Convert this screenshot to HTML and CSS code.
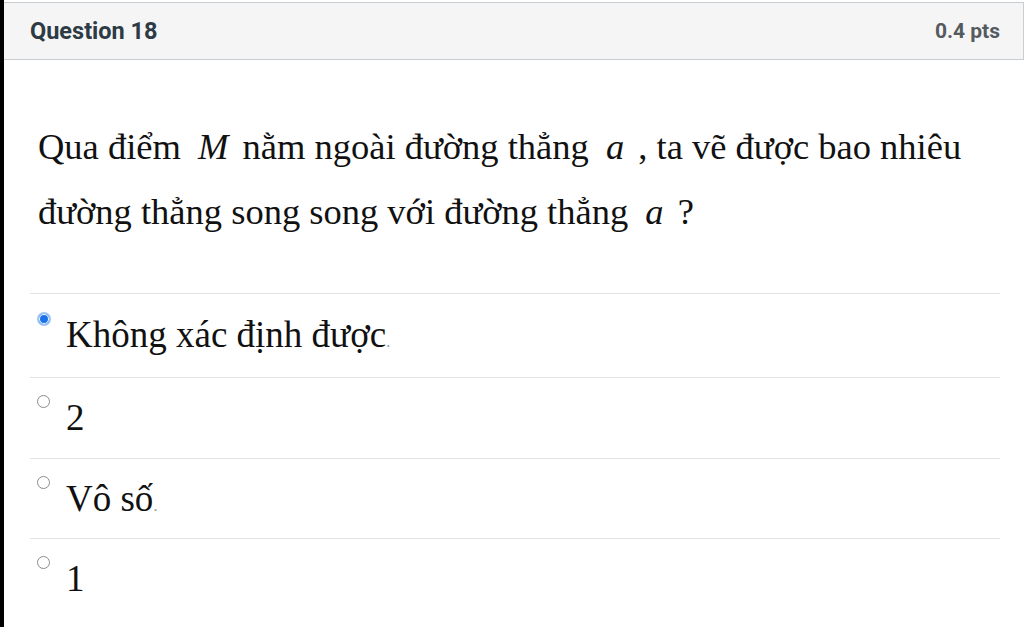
FILE: index.html
```html
<!DOCTYPE html>
<html lang="vi">
<head>
<meta charset="utf-8">
<title>Question 18</title>
<link rel="stylesheet" href="styles.css">
</head>
<body>
<div class="edge"></div>
<main class="quiz">
  <header class="q-header">
    <h2 class="q-title">Question 18</h2>
    <span class="q-pts">0.4 pts</span>
  </header>
  <div class="q-body">
    <p class="q-text">Qua điểm <i class="var">M</i> nằm ngoài đường thẳng <i class="var">a</i> , ta vẽ được bao nhiêu<br>đường thẳng song song với đường thẳng <i class="var">a</i> ?</p>
    <ul class="answers">
      <li class="answer"><span class="radio checked"></span><span class="label">Không xác định được<span class="dot">.</span></span></li>
      <li class="answer"><span class="radio"></span><span class="label">2</span></li>
      <li class="answer"><span class="radio"></span><span class="label">Vô số<span class="dot">.</span></span></li>
      <li class="answer"><span class="radio"></span><span class="label">1</span></li>
    </ul>
  </div>
</main>
</body>
</html>
```

FILE: styles.css
```css
* { box-sizing: border-box; }
html, body { margin: 0; padding: 0; background: #fff; }
body {
  display: flex;
  height: 627px;
  overflow: hidden;
}
.edge {
  width: 4px;
  flex: 0 0 4px;
  background: #000;
}
.quiz {
  flex: 1;
  padding-top: 2px;
}
.q-header {
  display: flex;
  justify-content: space-between;
  align-items: center;
  height: 58px;
  background: #f5f5f5;
  border-top: 1px solid #c7cdd1;
  border-bottom: 1px solid #c7cdd1;
  border-right: 1px solid #c7cdd1;
  padding: 0 23px 0 26px;
  font-family: Roboto, "Liberation Sans", sans-serif;
  font-weight: 700;
}
.q-title {
  margin: 0;
  font-size: 23.5px;
  color: #2d3b45;
}
.q-pts {
  font-size: 21px;
  color: #555a5e;
}
.q-body {
  padding: 0 0 0 26px;
  width: 996px;
}
.q-text {
  margin: 54px 0 0 8px;
  font-family: "Liberation Serif", "Times New Roman", serif;
  font-size: 36.5px;
  line-height: 65px;
  color: #111;
}
.var {
  font-style: italic;
  margin: 0 5px 0 8px;
}
.answers {
  list-style: none;
  margin: 49px 0 0 0;
  padding: 0;
}
.answer {
  display: flex;
  align-items: flex-start;
  border-top: 1px solid #e2e2e2;
  padding: 17px 0 0 7px;
  height: 81px;
  overflow: hidden;
}
.answer:first-child {
  height: 84px;
  padding-top: 18px;
}
.answer:nth-child(3) {
  height: 80px;
}
.radio {
  width: 13px;
  height: 13px;
  border-radius: 50%;
  border: 1px solid #8a8a8a;
  background: #fff;
  flex: 0 0 13px;
}
.radio.checked {
  width: 14px;
  height: 14px;
  flex-basis: 14px;
  border: 2px solid #9cc3f5;
  background: #1a73e8;
  box-shadow: inset 0 0 0 1px #fff;
}
.label {
  margin: 3px 0 0 16px;
  font-family: "Liberation Serif", "Times New Roman", serif;
  font-size: 37px;
  line-height: 40px;
  color: #111;
}
.checked + .label {
  margin-left: 15px;
}
.dot {
  font-size: 16px;
  color: #999;
}
```
